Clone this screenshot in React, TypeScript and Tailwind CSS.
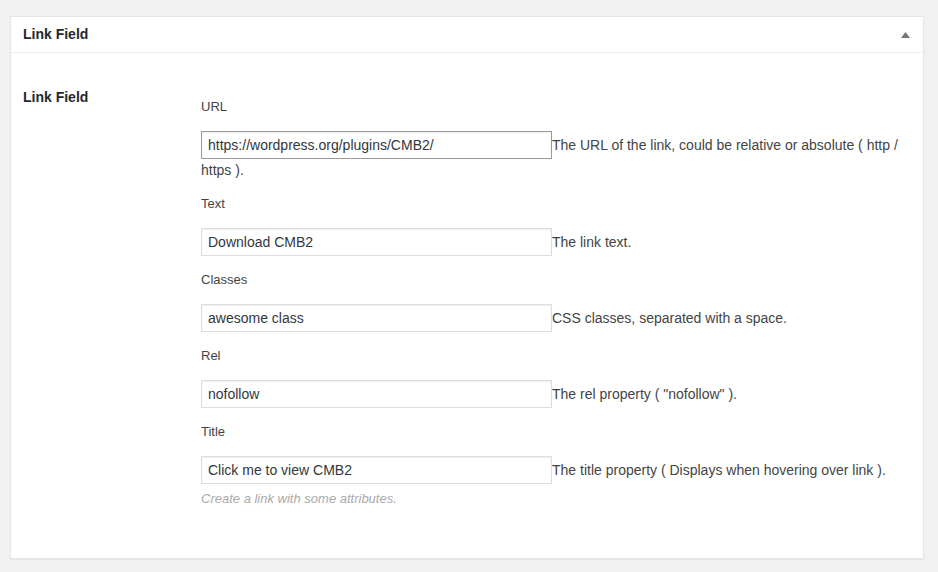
import React from "react";

const fields = [
  { label: "URL", value: "https://wordpress.org/plugins/CMB2/", desc: "The URL of the link, could be relative or absolute ( http / https ).", focus: true },
  { label: "Text", value: "Download CMB2", desc: "The link text." },
  { label: "Classes", value: "awesome class", desc: "CSS classes, separated with a space." },
  { label: "Rel", value: "nofollow", desc: "The rel property ( \"nofollow\" )." },
  { label: "Title", value: "Click me to view CMB2", desc: "The title property ( Displays when hovering over link )." },
];

export default function App() {
  return (
    <div className="min-h-[572px] w-[938px] bg-[#f1f1f1] pt-[16px] pl-[10px] text-[#444]" style={{ fontFamily: '"Liberation Sans", Arial, sans-serif' }}>
      <div className="w-[914px] h-[543px] border border-[#e5e5e5] bg-white shadow-[0_1px_1px_rgba(0,0,0,0.04)]">
        <div className="h-[36px] border-b border-[#eeeeee] flex items-center justify-between pl-[12px] pr-[13px]">
          <span className="text-[14px] font-bold text-[#23282d]">Link Field</span>
          <svg width="9" height="6" viewBox="0 0 9 6"><path d="M0 6 L4.5 0 L9 6 Z" fill="#72777c" /></svg>
        </div>
        <div className="flex pl-[12px] pr-[12px]">
          <div className="w-[178px] shrink-0 pt-[34px] text-[14px] font-bold text-[#23282d] leading-5">Link Field</div>
          <div className="pt-[44px] w-[712px]">
            {fields.map((f) => (
              <div key={f.label} className="mb-[14px]">
                <div className="text-[13px] leading-5 text-[#444] mb-[14px]">{f.label}</div>
                <div className="text-[14px] leading-5 text-[#444]">
                  <input
                    readOnly
                    value={f.value}
                    className={`inline-block align-middle w-[351px] h-[28px] px-[6px] text-[14px] text-[#32373c] bg-white outline-none border ${f.focus ? "border-[#999999]" : "border-[#dddddd]"} shadow-[inset_0_1px_2px_rgba(0,0,0,0.07)]`}
                    style={{ fontFamily: '"Liberation Sans", Arial, sans-serif' }}
                  />
                  <span className="align-middle">{f.desc}</span>
                </div>
              </div>
            ))}
            <div className="-mt-[9px] text-[13px] italic text-[#aaaaaa] leading-5">Create a link with some attributes.</div>
          </div>
        </div>
      </div>
    </div>
  );
}
